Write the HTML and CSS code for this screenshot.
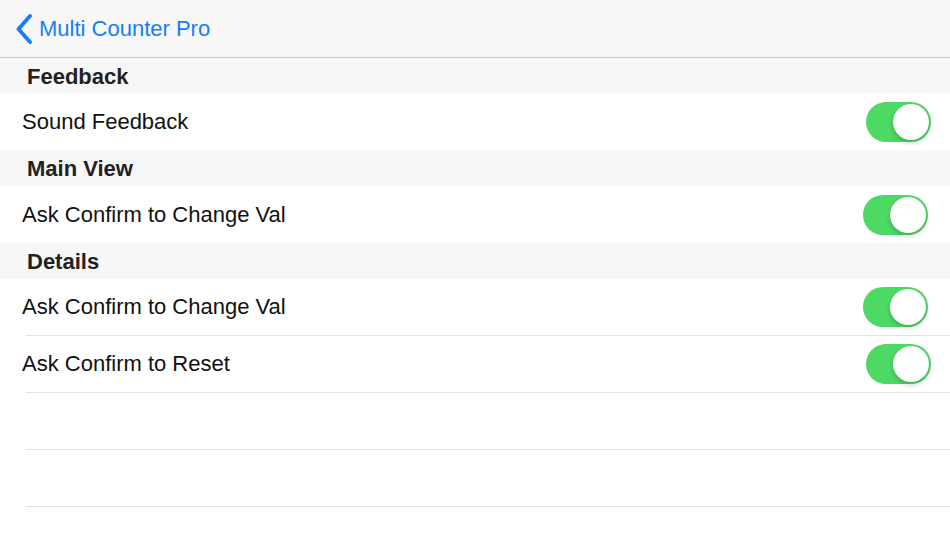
FILE: index.html
```html
<!DOCTYPE html>
<html>
<head>
<meta charset="utf-8">
<link rel="stylesheet" href="styles.css">
</head>
<body>
<div class="nav">
  <svg class="chev" width="18" height="30" viewBox="0 0 18 30"><path d="M15 2 L3.5 15 L15 28" fill="none" stroke="#157efb" stroke-width="3.8" stroke-linecap="round" stroke-linejoin="round"/></svg>
  <span class="nav-title">Multi Counter Pro</span>
</div>
<div class="list">
  <div class="header h-first">Feedback</div>
  <div class="row"><span class="label">Sound Feedback</span><span class="toggle"></span></div>
  <div class="header">Main View</div>
  <div class="row"><span class="label">Ask Confirm to Change Val</span><span class="toggle shift"></span></div>
  <div class="header">Details</div>
  <div class="row sep"><span class="label">Ask Confirm to Change Val</span><span class="toggle shift"></span></div>
  <div class="row sep"><span class="label">Ask Confirm to Reset</span><span class="toggle"></span></div>
  <div class="row sep"></div>
  <div class="row sep"></div>
</div>
</body>
</html>
```
FILE: styles.css
```css
html, body {
  margin: 0;
  padding: 0;
  background: #ffffff;
  font-family: "Liberation Sans", Arial, sans-serif;
  width: 950px;
  height: 534px;
  overflow: hidden;
}
.nav {
  height: 57px;
  background: #f7f7f7;
  border-bottom: 1px solid #c9c9c9;
  display: flex;
  align-items: center;
  padding-left: 15px;
  box-sizing: content-box;
}
.chev {
  display: block;
}
.nav-title {
  color: #157efb;
  font-size: 22px;
  margin-left: 6px;
}
.list {
  display: flex;
  flex-direction: column;
}
.header {
  height: 36px;
  background: #f7f7f7;
  display: flex;
  align-items: center;
  padding-left: 27px;
  padding-top: 2px;
  box-sizing: border-box;
  font-size: 22px;
  font-weight: bold;
  color: #222222;
}
.h-first {
  height: 35px;
}
.row {
  height: 57px;
  display: flex;
  align-items: center;
  justify-content: space-between;
  padding-left: 22px;
  padding-right: 19px;
  font-size: 22px;
  color: #111111;
  box-sizing: border-box;
}
.row.sep {
  border-bottom: 1px solid #e2e2e2;
  border-image: linear-gradient(to right, transparent 27px, #e2e2e2 27px) 1;
}
.toggle {
  width: 65px;
  height: 40px;
  border-radius: 20px;
  background: #4cd964;
  position: relative;
  flex: none;
}
.toggle.shift {
  margin-right: 3px;
}
.toggle::after {
  content: "";
  position: absolute;
  right: 2px;
  top: 2px;
  width: 36px;
  height: 36px;
  border-radius: 50%;
  background: #ffffff;
  box-shadow: 0 3px 5px rgba(0,0,0,0.18), 0 0 1px rgba(0,0,0,0.15);
}
```
